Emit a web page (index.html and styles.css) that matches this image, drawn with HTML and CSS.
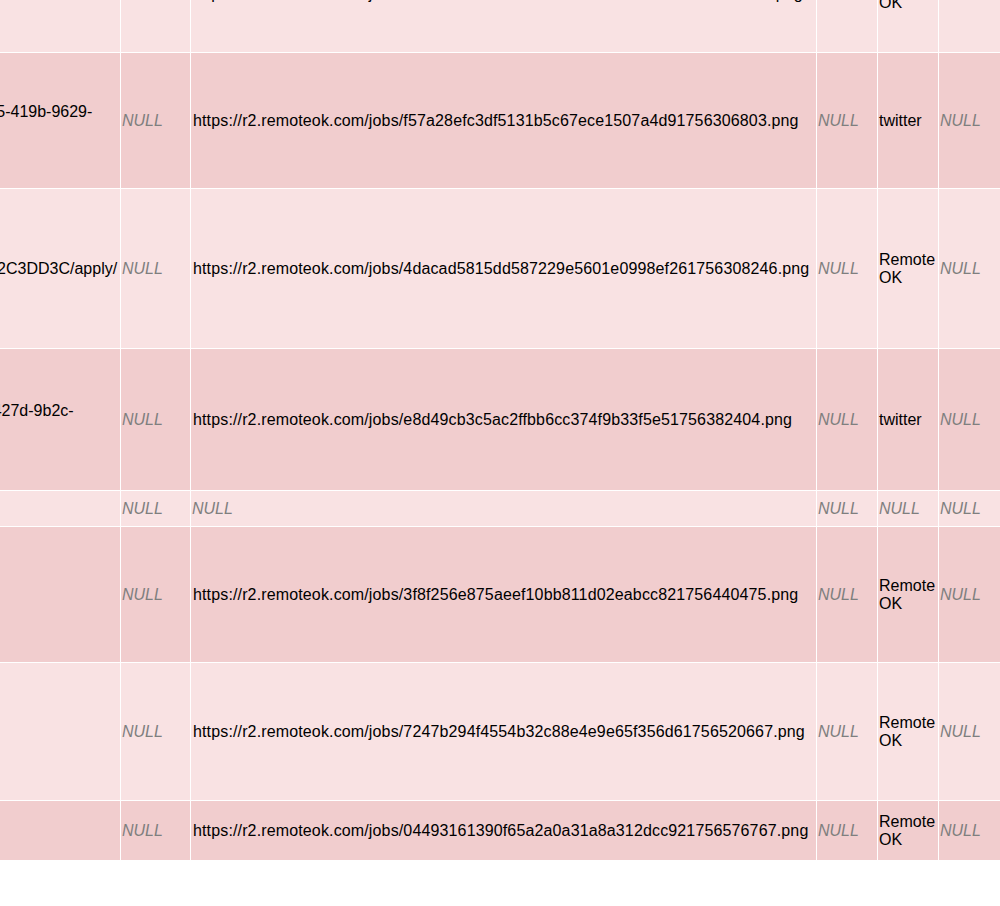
FILE: index.html
```html
<!DOCTYPE html>
<html lang="en">
<head>
<meta charset="utf-8">
<title>jobs</title>
<link rel="stylesheet" href="styles.css">
</head>
<body>
<table class="grid">
  <colgroup>
    <col class="c-apply">
    <col class="c-null">
    <col class="c-logo">
    <col class="c-small">
    <col class="c-source">
    <col class="c-last">
  </colgroup>
  <tbody>
    <tr class="r0">
      <td class="txt"></td>
      <td class="null">NULL</td>
      <td class="url">https://r2.remoteok.com/jobs/9c1e7a04bd2f5163a8e0c47d2b95f3e61756301127.png</td>
      <td class="null">NULL</td>
      <td>Remote OK</td>
      <td class="null">NULL</td>
    </tr>
    <tr class="r1">
      <td class="txt">ues/apply/389a1c7e-b2d5-419b-9629-<br>4e1a7c2d0b8f</td>
      <td class="null">NULL</td>
      <td class="url">https://r2.remoteok.com/jobs/f57a28efc3df5131b5c67ece1507a4d91756306803.png</td>
      <td class="null">NULL</td>
      <td>twitter</td>
      <td class="null">NULL</td>
    </tr>
    <tr class="r2">
      <td class="txt">careers/jobs/E9A1B4F-A2C3DD3C/apply/</td>
      <td class="null">NULL</td>
      <td class="url">https://r2.remoteok.com/jobs/4dacad5815dd587229e5601e0998ef261756308246.png</td>
      <td class="null">NULL</td>
      <td>Remote OK</td>
      <td class="null">NULL</td>
    </tr>
    <tr class="r3">
      <td class="txt">es/jobs/apply/5c8b0c4c-427d-9b2c-<br>a41f</td>
      <td class="null">NULL</td>
      <td class="url">https://r2.remoteok.com/jobs/e8d49cb3c5ac2ffbb6cc374f9b33f5e51756382404.png</td>
      <td class="null">NULL</td>
      <td>twitter</td>
      <td class="null">NULL</td>
    </tr>
    <tr class="r4">
      <td class="txt"></td>
      <td class="null">NULL</td>
      <td class="null">NULL</td>
      <td class="null">NULL</td>
      <td class="null">NULL</td>
      <td class="null">NULL</td>
    </tr>
    <tr class="r5">
      <td class="txt"></td>
      <td class="null">NULL</td>
      <td class="url">https://r2.remoteok.com/jobs/3f8f256e875aeef10bb811d02eabcc821756440475.png</td>
      <td class="null">NULL</td>
      <td>Remote OK</td>
      <td class="null">NULL</td>
    </tr>
    <tr class="r6">
      <td class="txt"></td>
      <td class="null">NULL</td>
      <td class="url">https://r2.remoteok.com/jobs/7247b294f4554b32c88e4e9e65f356d61756520667.png</td>
      <td class="null">NULL</td>
      <td>Remote OK</td>
      <td class="null">NULL</td>
    </tr>
    <tr class="r7">
      <td class="txt"></td>
      <td class="null">NULL</td>
      <td class="url">https://r2.remoteok.com/jobs/04493161390f65a2a0a31a8a312dcc921756576767.png</td>
      <td class="null">NULL</td>
      <td>Remote OK</td>
      <td class="null">NULL</td>
    </tr>
  </tbody>
</table>
</body>
</html>
```
FILE: styles.css
```css
html, body {
  margin: 0;
  padding: 0;
  overflow: hidden;
  background: #ffffff;
}

body {
  font-family: "Liberation Sans", Arial, Helvetica, sans-serif;
  font-size: 16px;
  color: #000000;
}

.grid {
  table-layout: fixed;
  border-collapse: separate;
  border-spacing: 0;
  width: 1199px;
  margin: -64px 0 0 -180px;
}

.c-apply { width: 301px; }
.c-null { width: 70px; }
.c-logo { width: 626px; }
.c-small { width: 61px; }
.c-source { width: 61px; }
.c-last { width: 80px; }

.grid td {
  padding: 0 1px;
  border-right: 1px solid #ffffff;
  border-bottom: 1px solid #ffffff;
  vertical-align: middle;
  line-height: normal;
  overflow: hidden;
  overflow-wrap: break-word;
}

.grid tr:nth-child(odd) td { background: #f9e2e3; }
.grid tr:nth-child(even) td { background: #f1cdce; }

.grid td.txt { white-space: nowrap; }

.grid td.url {
  padding-left: 2px;
  letter-spacing: 0.14px;
}

.grid td.null {
  font-style: italic;
  color: #7f7f7f;
}

.r0 { height: 117px; }
.r1 { height: 136px; }
.r2 { height: 160px; }
.r3 { height: 142px; }
.r4 { height: 36px; }
.r5 { height: 136px; }
.r6 { height: 138px; }
.r7 { height: 60px; }
```
